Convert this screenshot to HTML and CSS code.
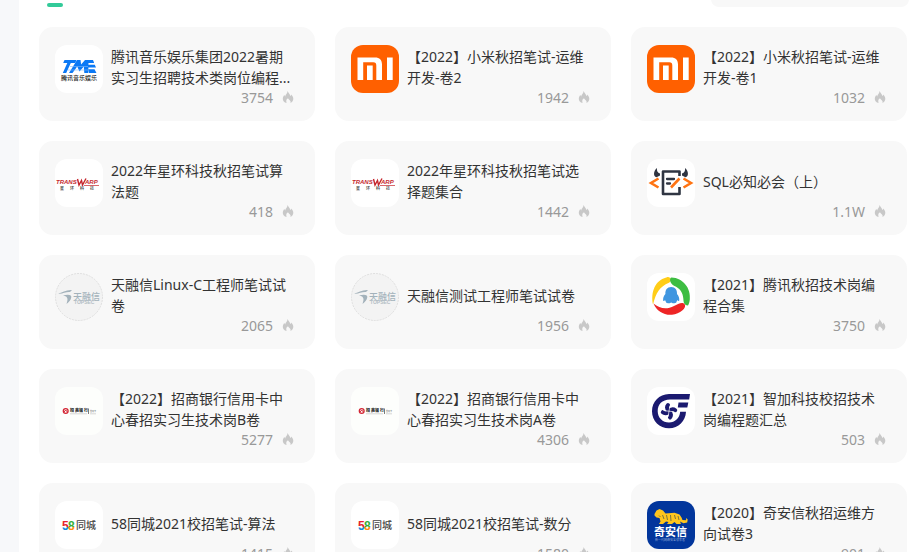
FILE: index.html
```html
<!DOCTYPE html>
<html lang="zh-CN">
<head>
<meta charset="utf-8">
<title>笔试真题</title>
<link rel="stylesheet" href="styles.css">
</head>
<body>
<svg class="sprite" aria-hidden="true">
  <defs>
    <linearGradient id="five" x1="0" y1="0" x2="0" y2="1"><stop offset=".58" stop-color="#e5222e"/><stop offset=".58" stop-color="#1687d9"/></linearGradient>
    <linearGradient id="eight" x1="0" y1="0" x2="0" y2="1"><stop offset=".56" stop-color="#35ad35"/><stop offset=".56" stop-color="#ff8a12"/></linearGradient>
  </defs>
  <symbol id="fire" viewBox="0 0 12 12">
    <path fill="#c8c8c8" d="M5.600 0C6.200 2 8 3.200 8.500 5c.5-.3.700-.8.700-1.500C10.400 4.600 11.300 6 11.300 7.800c0 1.800-1 3.300-2.900 4.200.4-1.300.2-2.300-.9-3.100-.9-.6-1.300-1-1.400-1.600C4.900 8 4.400 8.700 4.300 9.600c-.1.900 0 1.600.3 2.400C2.200 11.300.8 9.700.8 7.900c0-1.600.7-2.700 1.600-3.800.2.700.4 1.100.8 1.400C3.300 3.400 5.700 2.500 5.600 0z"/>
  </symbol>
  <symbol id="tme" viewBox="0 0 48 48">
    <rect width="48" height="48" fill="#fff"/>
    <g fill="#0b79f5">
      <path d="M9.500 15h12l-1.300 3h-4.400l-4.600 10H7.800l4.500-10H8.200z"/>
      <path d="M22 15h3.500l.6 4.500L30 15h3.500l-.2 13h-4l-.5-6.500-4.300 5-2.300-5L17.500 28H14z"/>
      <path d="M30.500 15H38l1.200 3h-6.800zM32.500 19.700h7.300l1.200 2.900h-8zM33 24.200h6.500L41.500 28H34z"/>
    </g>
    <path d="M15 21.500h18M13 25h21" stroke="#7fb9fb" stroke-width=".6"/>
    <text x="6" y="35" font-size="6" font-weight="500" fill="#222">腾讯音乐娱乐</text>
  </symbol>
  <symbol id="mi" viewBox="0 0 48 48">
    <rect width="48" height="48" fill="#ff6000"/>
    <path fill="#fff" d="M6.500 12.500H24c4.600 0 7 2.500 7 7V35h-5.700V20.500c0-2.200-.8-3.200-3-3.200H12.200V35H6.500zM16 20.500h5.700V35H16zM36 12.500h5.700V35H36z"/>
  </symbol>
  <symbol id="transwarp" viewBox="0 0 48 48">
    <rect width="48" height="48" fill="#fff"/>
    <g class="latin" fill="#c5262d" font-weight="700" font-style="italic" font-size="6">
      <text x="1" y="25">TRANS</text>
      <text x="30" y="25">ARP</text>
    </g>
    <path d="M22.500 20l1.500 6 2.500-4.500 1 4.500L31 19.500" fill="none" stroke="#c5262d" stroke-width="1.400"/>
    <path d="M29 26.500h15" stroke="#c5262d" stroke-width=".7"/>
    <g fill="#333" font-size="4" font-weight="500"><text x="5" y="31">星</text><text x="15" y="31">环</text><text x="25" y="31">科</text><text x="35" y="31">技</text></g>
  </symbol>
  <symbol id="sql" viewBox="0 0 48 48">
    <rect width="48" height="48" fill="#fff"/>
    <path d="M32.500 17v-4.500H16v22.500h16.500V28" fill="none" stroke="#2f3542" stroke-width="2.600" stroke-linejoin="round"/>
    <path d="M20 20h7M20 24.500h3" stroke="#2f3542" stroke-width="2.300" stroke-linecap="round"/>
    <path fill="#2f3542" d="M10 9c-4 3.500-3.700 8.500-.5 9.200l3.500-1.700v-2c-2.500-.7-3.400-2.700-3-5.500zM38 9c4 3.500 3.700 8.500.5 9.200L35 16.500v-2c2.500-.7 3.400-2.700 3-5.500z"/>
    <path d="M11.500 19.500L4 24l7.500 4.500M36.500 19.500L44 24l-7.500 4.500M32.500 19.500L24 28.500" fill="none" stroke="#ff7413" stroke-width="2.600"/>
  </symbol>
  <symbol id="topsec" viewBox="0 0 48 48">
    <circle cx="24" cy="24" r="23.500" fill="#f3f3f3" stroke="#dedede" stroke-width="1" stroke-dasharray="2 1"/>
    <path fill="#a3b2bb" d="M3 20.500c4-.7 8.500-4 14-3.500l-2 2c-4-.5-8 2.300-12 1.500zM8 22.500c6-1.500 9-.5 8.200 2.300-.5 2.200-2.200 4.500-4.700 6.200 1.600-4.600 2-7.500-3.500-8.500z"/>
    <text x="18" y="27" font-size="9" font-weight="500" fill="#a3b2bb">天融信</text>
    <text x="19" y="31" font-size="5" font-weight="700" fill="#b3bec5" class="latin">TOPSEC</text>
  </symbol>
  <symbol id="tencent" viewBox="0 0 48 48">
    <rect width="48" height="48" fill="#fff"/>
    <path fill="#ffcd18" d="M6 31.500C3.500 19 8 7 20 4.200c4-.8 5.300 3.800 2 5.500C12.500 13.500 9 20 6 31.500z"/>
    <path fill="#3dbd42" d="M24.500 4.500c11.500.5 19.500 10.500 18.300 22-.3 2.200-.8 4.300-1.800 6-4.300-.2-4.400-3.300-4.700-7C35.800 19 33 15.500 27 12.700c-4.300-2-5-7.900-2.500-8.200z"/>
    <path fill="#ee2526" d="M6.500 30.500c6 4.700 12.500 6.700 20.500 2.500 4-2 8.500-4.700 10.700-1.700 2.400 3.600-4.700 9.700-12.700 10.500C17 42.500 9.500 38 6.500 30.500z"/>
    <path fill="#4096e0" d="M24.200 14c4.200 0 6 3.200 5.800 7 1.800 2 2.600 4.500 2.200 6.700-.5.600-1.300 0-1.900-.8-.1 1-.5 1.600-1.100 2.200 1.100 1.300-3 1.700-5 .3-2 1.400-6.100 1-5-.3-.6-.6-1-1.200-1.100-2.200-.6.800-1.400 1.400-1.900.8-.4-2.200.4-4.700 2.200-6.700-.2-3.800 1.600-7 5.800-7z"/>
  </symbol>
  <symbol id="cmb" viewBox="0 0 48 48">
    <rect width="48" height="48" fill="#fdfefc"/>
    <circle cx="10.700" cy="24" r="2.400" fill="none" stroke="#d32635" stroke-width="1.300"/>
    <path d="M9 25l1.700-2 1.700 2" fill="none" stroke="#d32635"/>
    <g font-size="4" font-weight="900" fill="#222"><text x="15" y="25">招</text><text x="20" y="25">商</text><text x="24" y="25">银</text><text x="29" y="25">行</text></g>
    <path d="M33.500 21.500v5.500" stroke="#444" stroke-width=".7"/>
    <text x="35" y="25" font-size="2" fill="#666">信用卡</text>
    <path d="M15 26.800h17M35 26.800h6" stroke="#bbb" stroke-width=".6"/>
  </symbol>
  <symbol id="zhijia" viewBox="0 0 48 48">
    <rect width="48" height="48" fill="#fff"/>
    <g fill="#1b1a70">
      <path d="M43 7l-.8 5.500H23C15 12.500 10.700 17.500 10.700 24.200c0 6.500 5 11.300 11.300 11.300 6 0 10.600-4.300 11.200-10.800H39C38.500 34 31.500 41.300 22 41.300 12.500 41.300 5 34 5 24.300 5 14.500 12 7.500 22 7z"/>
      <path d="M31.500 15.500h9.800l-1 5h-9.500z"/>
    </g>
    <path d="M22 24.200c-3-2.500-2-5-1-6.200M22 24.200c2.500-3 5-2 6.200-1M22 24.200c3 2.500 2 5 1 6.200M22 24.200c-2.500 3-5 2-6.200 1" fill="none" stroke="#1b1a70" stroke-width="4" stroke-linecap="round"/>
    <path d="M24 17.500c-1.500 2-1.500 4-2 6.700M28.700 26c-2-1.500-4-1.500-6.700-1.800M20 31c1.500-2 1.500-4 2-6.800M15.300 22.400c2 1.500 4 1.500 6.700 1.800" fill="none" stroke="#fff" stroke-width=".7"/>
  </symbol>
  <symbol id="wuba" viewBox="0 0 48 48">
    <rect width="48" height="48" fill="#fff"/>
    <g class="latin" font-size="12" font-weight="700"><text x="7" y="29" fill="url(#five)">5</text><text x="13" y="29" fill="url(#eight)">8</text></g>
    <text x="21" y="28" font-size="10" font-weight="500" fill="#444">同城</text>
  </symbol>
  <symbol id="qianxin" viewBox="0 0 48 48">
    <rect width="48" height="48" fill="#02369c"/>
    <path fill="#ffc51d" d="M7.500 13l2-3.500 3-1.500 3.500 1.500 2.500 3 9-.7 5 1.700 2 3 1 2.500 3.500.3.200-2.300 1.500 1.500-.5 3-3.700.7-3.500-1.700 1 2.500h-4.500l-2-2-2.500 2H20l1.500-2-2.500-.5-3 2.500h-4l1.500-2.500-1-3.500-3-.5-2-2z"/>
    <path d="M15.500 14l1.500 4M19.500 14l1 5M23.500 14l.5 6M27.500 14l1 4M31 15l1 4M12 14.500l1.500 1.500" stroke="#6b6b40" stroke-width=".9"/>
    <text x="7" y="35" font-size="11" font-weight="700" fill="#fff">奇安信</text>
    <text x="8" y="40" font-size="3" fill="#8fa8d8">新一代网络安全领军者</text>
  </symbol>
</svg>

<div class="page">
  <main class="main">
    <header class="toolbar">
      <span class="tab-marker"></span>
      <input class="search" type="search" aria-label="搜索">
    </header>
    <div class="papers">
      <a class="card" href="#"><svg class="logo"><use href="#tme"/></svg><div class="info"><div class="title"><span>腾讯音乐娱乐集团2022暑期实习生招聘技术类岗位编程...</span></div><div class="heat">3754<svg class="fire"><use href="#fire"/></svg></div></div></a>
      <a class="card" href="#"><svg class="logo"><use href="#mi"/></svg><div class="info"><div class="title"><span>【2022】小米秋招笔试-运维开发-卷2</span></div><div class="heat">1942<svg class="fire"><use href="#fire"/></svg></div></div></a>
      <a class="card" href="#"><svg class="logo"><use href="#mi"/></svg><div class="info"><div class="title"><span>【2022】小米秋招笔试-运维开发-卷1</span></div><div class="heat">1032<svg class="fire"><use href="#fire"/></svg></div></div></a>
      <a class="card" href="#"><svg class="logo"><use href="#transwarp"/></svg><div class="info"><div class="title"><span>2022年星环科技秋招笔试算法题</span></div><div class="heat">418<svg class="fire"><use href="#fire"/></svg></div></div></a>
      <a class="card" href="#"><svg class="logo"><use href="#transwarp"/></svg><div class="info"><div class="title"><span>2022年星环科技秋招笔试选择题集合</span></div><div class="heat">1442<svg class="fire"><use href="#fire"/></svg></div></div></a>
      <a class="card" href="#"><svg class="logo"><use href="#sql"/></svg><div class="info"><div class="title"><span>SQL必知必会（上）</span></div><div class="heat">1.1W<svg class="fire"><use href="#fire"/></svg></div></div></a>
      <a class="card" href="#"><svg class="logo"><use href="#topsec"/></svg><div class="info"><div class="title"><span>天融信Linux-C工程师笔试试卷</span></div><div class="heat">2065<svg class="fire"><use href="#fire"/></svg></div></div></a>
      <a class="card" href="#"><svg class="logo"><use href="#topsec"/></svg><div class="info"><div class="title"><span>天融信测试工程师笔试试卷</span></div><div class="heat">1956<svg class="fire"><use href="#fire"/></svg></div></div></a>
      <a class="card" href="#"><svg class="logo"><use href="#tencent"/></svg><div class="info"><div class="title"><span>【2021】腾讯秋招技术岗编程合集</span></div><div class="heat">3750<svg class="fire"><use href="#fire"/></svg></div></div></a>
      <a class="card" href="#"><svg class="logo"><use href="#cmb"/></svg><div class="info"><div class="title"><span>【2022】招商银行信用卡中心春招实习生技术岗B卷</span></div><div class="heat">5277<svg class="fire"><use href="#fire"/></svg></div></div></a>
      <a class="card" href="#"><svg class="logo"><use href="#cmb"/></svg><div class="info"><div class="title"><span>【2022】招商银行信用卡中心春招实习生技术岗A卷</span></div><div class="heat">4306<svg class="fire"><use href="#fire"/></svg></div></div></a>
      <a class="card" href="#"><svg class="logo"><use href="#zhijia"/></svg><div class="info"><div class="title"><span>【2021】智加科技校招技术岗编程题汇总</span></div><div class="heat">503<svg class="fire"><use href="#fire"/></svg></div></div></a>
      <a class="card" href="#"><svg class="logo"><use href="#wuba"/></svg><div class="info"><div class="title"><span>58同城2021校招笔试-算法</span></div><div class="heat">1415<svg class="fire"><use href="#fire"/></svg></div></div></a>
      <a class="card" href="#"><svg class="logo"><use href="#wuba"/></svg><div class="info"><div class="title"><span>58同城2021校招笔试-数分</span></div><div class="heat">1580<svg class="fire"><use href="#fire"/></svg></div></div></a>
      <a class="card" href="#"><svg class="logo"><use href="#qianxin"/></svg><div class="info"><div class="title"><span>【2020】奇安信秋招运维方向试卷3</span></div><div class="heat">901<svg class="fire"><use href="#fire"/></svg></div></div></a>
    </div>
  </main>
</div>
</body>
</html>
```
FILE: styles.css
```css
* { box-sizing: border-box; }

body {
  margin: 0;
  height: 100vh;
  overflow: hidden;
  background: #f7f8fa;
  color: #333;
  font-family: "Noto Sans", "Noto Sans CJK SC", sans-serif;
  font-size: 14px;
}

.sprite {
  position: absolute;
  width: 0;
  height: 0;
}

.page { padding-left: 19px; }

.main {
  background: #fff;
  padding: 0 15px 20px 20px;
}

.toolbar {
  display: flex;
  align-items: flex-end;
  justify-content: space-between;
  height: 7px;
  margin-bottom: 20px;
  overflow: hidden;
}

.tab-marker {
  width: 16px;
  height: 4px;
  margin-left: 8px;
  border-radius: 2px;
  background: #32ca99;
}

.search {
  flex: none;
  width: 198px;
  height: 32px;
  border: 0;
  border-radius: 8px;
  background: #f8f8f8;
}

.papers {
  display: grid;
  grid-template-columns: repeat(3, 1fr);
  gap: 20px;
  margin-right: 2px;
}

.card {
  display: flex;
  gap: 8px;
  padding: 18px 16px 16px;
  border-radius: 14px;
  background: #f8f8f8;
  color: inherit;
  text-decoration: none;
}

.logo {
  flex: none;
  width: 48px;
  height: 48px;
  border-radius: 12px;
  font-family: "Noto Sans CJK SC", sans-serif;
}

.latin { font-family: "Liberation Sans", sans-serif; }

.info {
  flex: 1;
  min-width: 0;
  padding-right: 5px;
}

.title {
  display: flex;
  align-items: center;
  height: 44px;
  line-height: 21px;
}

.heat {
  display: flex;
  align-items: center;
  justify-content: flex-end;
  gap: 9px;
  height: 16px;
  color: #999;
}

.fire {
  width: 12px;
  height: 12px;
}
```
